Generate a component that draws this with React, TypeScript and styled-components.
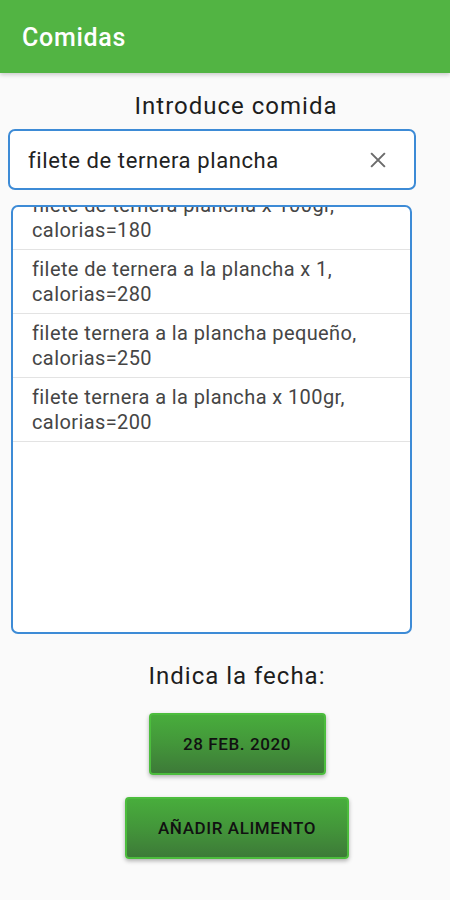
import React from "react";
import styled, { createGlobalStyle } from "styled-components";

const Global = createGlobalStyle`
  html, body { margin: 0; padding: 0; background: #fafafa; }
  body { font-family: Roboto, "Noto Sans", sans-serif; }
  * { box-sizing: border-box; }
`;

const Page = styled.div`
  width: 450px;
  height: 900px;
  display: flex;
  flex-direction: column;
  background: #fafafa;
  overflow: hidden;
`;

const AppBar = styled.header`
  height: 73px;
  flex: none;
  background: #52b443;
  display: flex;
  align-items: center;
  padding: 0 22px;
  box-shadow: 0 2px 4px rgba(0, 0, 0, 0.18);
`;

const Title = styled.h1`
  margin: 0;
  color: #fff;
  font-size: 25px;
  font-weight: 500;
  letter-spacing: 0.7px;
  padding-top: 2px;
`;

const Body = styled.main`
  display: flex;
  flex-direction: column;
  align-items: stretch;
  padding: 0 36px 0 8px;
`;

const Heading = styled.div`
  text-align: center;
  font-size: 24px;
  letter-spacing: 1px;
  color: #1d1d1d;
  margin: 19px 0 0 50px;
  line-height: 28px;
`;

const SearchBox = styled.div`
  margin-top: 9px;
  height: 61px;
  border: 2px solid #3d8bd6;
  border-radius: 7px;
  background: #fff;
  display: flex;
  align-items: center;
  padding: 0 25px 0 18px;
  margin-right: -2px;
`;

const SearchText = styled.span`
  flex: 1;
  font-size: 22px;
  letter-spacing: 0.6px;
  color: #222;
  padding-top: 1px;
`;

const ClearIcon = styled.svg`
  width: 22px;
  height: 22px;
  flex: none;
`;

const ListBox = styled.div`
  margin: 15px 2px 0 3px;
  height: 429px;
  border: 2px solid #3d8bd6;
  border-radius: 7px;
  background: #fff;
  overflow: hidden;
`;

const List = styled.ul<{ $offset: number }>`
  list-style: none;
  margin: 0;
  padding: 0;
  transform: translateY(${(p) => -p.$offset}px);
`;

const Item = styled.li`
  height: 64px;
  padding: 7px 8px 0 19px;
  border-bottom: 1px solid #e3e3e3;
  font-size: 20px;
  letter-spacing: 0.4px;
  line-height: 25px;
  color: #454545;
  white-space: nowrap;
`;

const DateLabel = styled.div`
  text-align: center;
  font-size: 24px;
  letter-spacing: 1px;
  color: #1d1d1d;
  margin: 28px 0 0 52px;
  line-height: 28px;
`;

const GreenButton = styled.button<{ $width: number }>`
  align-self: center;
  width: ${(p) => p.$width}px;
  height: 62px;
  border: 2px solid #4cbd3d;
  border-radius: 4px;
  background: linear-gradient(to bottom, #48ad3c 0%, #43963a 50%, #3d7a38 100%);
  box-shadow: 0 2px 4px rgba(0, 0, 0, 0.3);
  color: #111;
  font-family: Roboto, "Noto Sans", sans-serif;
  font-size: 17px;
  font-weight: 500;
  letter-spacing: 0.6px;
  text-transform: uppercase;
  cursor: pointer;
  margin-left: 52px;
`;

const DateButton = styled(GreenButton)`
  margin-top: 23px;
`;

const AddButton = styled(GreenButton)`
  margin-top: 22px;
`;

const items = [
  ["filete de ternera plancha x 100gr,", "calorias=180"],
  ["filete de ternera a la plancha x 1,", "calorias=280"],
  ["filete ternera a la plancha pequeño,", "calorias=250"],
  ["filete ternera a la plancha x 100gr,", "calorias=200"],
];

export default function App() {
  return (
    <>
      <Global />
      <Page>
        <AppBar>
          <Title>Comidas</Title>
        </AppBar>
        <Body>
          <Heading>Introduce comida</Heading>
          <SearchBox>
            <SearchText>filete de ternera plancha</SearchText>
            <ClearIcon viewBox="0 0 24 24">
              <path d="M4.5 4.5 L19.5 19.5 M19.5 4.5 L4.5 19.5" stroke="#6b6b6b" strokeWidth="2.2" fill="none" />
            </ClearIcon>
          </SearchBox>
          <ListBox>
            <List $offset={21}>
              {items.map(([a, b]) => (
                <Item key={a}>
                  {a}
                  <br />
                  {b}
                </Item>
              ))}
            </List>
          </ListBox>
          <DateLabel>Indica la fecha:</DateLabel>
          <DateButton $width={177}>28 feb. 2020</DateButton>
          <AddButton $width={224}>Añadir alimento</AddButton>
        </Body>
      </Page>
    </>
  );
}
